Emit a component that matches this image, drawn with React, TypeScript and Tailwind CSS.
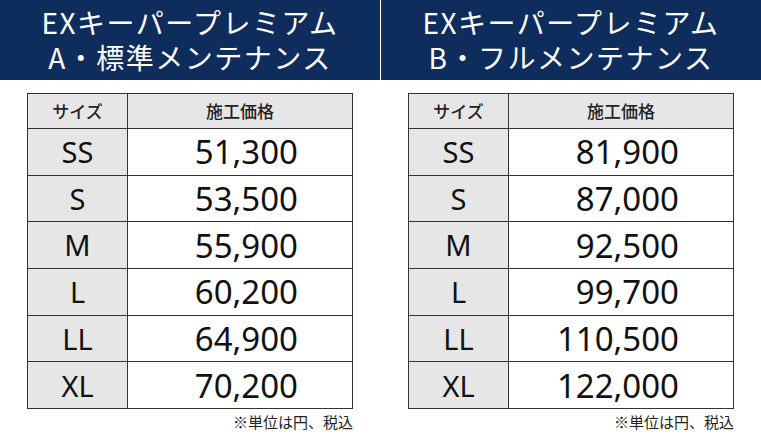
const PLANS = [
  {
    title: 'A・標準メンテナンス',
    prices: ['51,300', '53,500', '55,900', '60,200', '64,900', '70,200'],
  },
  {
    title: 'B・フルメンテナンス',
    prices: ['81,900', '87,000', '92,500', '99,700', '110,500', '122,000'],
  },
]

const SIZES = ['SS', 'S', 'M', 'L', 'LL', 'XL']

const JP = "font-['Noto_Sans_CJK_JP','Noto_Sans',sans-serif]"
const NUM = "font-['Noto_Sans','Open_Sans',sans-serif]"

function PriceTable({ title, prices }: { title: string; prices: string[] }) {
  return (
    <div className="w-[380px]">
      {/* Title band */}
      <div className={`flex h-[80px] flex-col items-center justify-center bg-[#0f2d5c] text-white ${JP}`}>
        <p className="text-[28px] leading-[35px] font-normal tracking-[1.5px]">EXキーパープレミアム</p>
        <p className="text-[28px] leading-[35px] font-normal tracking-[1.5px]">{title}</p>
      </div>

      {/* Table */}
      <div className="mx-auto mt-[13px] w-[326px]">
        <div className="border-[1.5px] border-[#333]">
          <div className={`grid h-[34px] grid-cols-[100px_1fr] bg-[#e6e6e6] text-[17px] font-medium text-[#222] ${JP}`}>
            <div className="flex items-center justify-center border-r-[1.5px] border-[#333]">サイズ</div>
            <div className="flex items-center justify-center">施工価格</div>
          </div>
          {SIZES.map((size, i) => (
            <div
              key={size}
              className={`grid h-[46.7px] grid-cols-[100px_1fr] border-t-[1.5px] border-[#333] ${NUM} text-[#111]`}
            >
              <div className="flex items-center justify-center border-r-[1.5px] border-[#333] bg-[#e6e6e6] text-[29px]">
                {size}
              </div>
              <div className="flex items-center justify-end bg-white pr-[54px] text-[33px] leading-none">
                {prices[i]}
              </div>
            </div>
          ))}
        </div>
        <p className={`mt-[3px] text-right text-[15px] leading-[20px] text-[#222] ${JP}`}>※単位は円、税込</p>
      </div>
    </div>
  )
}

export default function App() {
  return (
    <div className="h-[440px] w-[761px] overflow-hidden bg-white">
      <div className="flex gap-px">
        {PLANS.map((plan) => (
          <PriceTable key={plan.title} title={plan.title} prices={plan.prices} />
        ))}
      </div>
    </div>
  )
}
